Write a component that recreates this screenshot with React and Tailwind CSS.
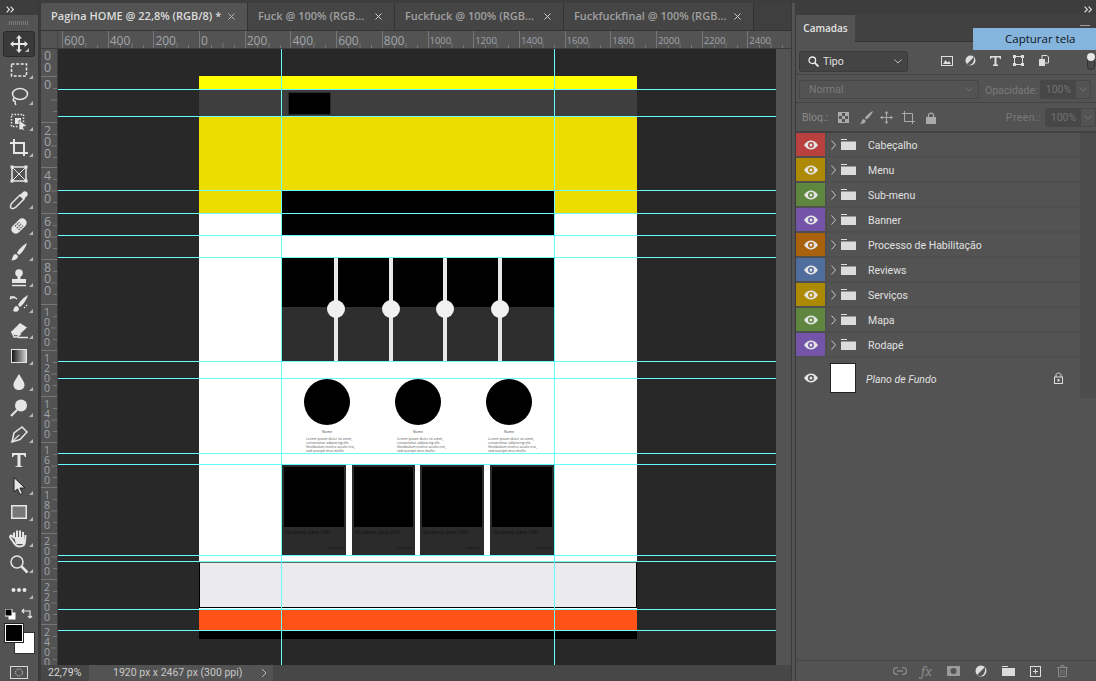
import React from "react";

const Tri = () => (
  <svg width="4" height="4" viewBox="0 0 4 4" className="absolute right-[5px] bottom-[4px]"><path d="M4 0V4H0Z" fill="#b8b8b8" /></svg>
);

const Chevrons = () => (
  <svg width="8" height="7" viewBox="0 0 8 7" fill="none" stroke="#e0e0e0" strokeWidth="1.200"><path d="M.6 .6L3.400 3.500L.6 6.400M4.600 .6L7.400 3.500L4.600 6.400" /></svg>
);

const S = ({ children, w = 20, h = 20, vb = "0 0 20 20" }) => (
  <svg width={w} height={h} viewBox={vb} fill="none" stroke="#e6e6e6" strokeWidth="1.5">{children}</svg>
);

const toolIcons = [
  <S key="move"><path d="M10 2V18M2 10H18" strokeWidth="2" /><path d="M10 1L7 4.500H13ZM10 19L7 15.500H13ZM1 10L4.500 7V13ZM19 10L15.500 7V13Z" fill="#e6e6e6" stroke="none" /></S>,
  <S key="marq"><rect x="2.500" y="4" width="15" height="12" strokeDasharray="3 1.600" /></S>,
  <S key="lasso"><ellipse cx="11" cy="8" rx="7.500" ry="5.500" /><path d="M5 12C3 14 5 16 6 14.500M6 14.500C6 16 6 18 7 19" /></S>,
  <S key="objsel"><rect x="2.500" y="2.500" width="12" height="12" strokeDasharray="1.600 1.400" /><rect x="6" y="6" width="6" height="6" fill="#e6e6e6" stroke="none" /><path d="M10 8L18 14L14 15L16 19L13 17.500L10 18Z" fill="#e6e6e6" stroke="#444" strokeWidth=".6" /></S>,
  <S key="crop"><path d="M1 5H15V18M5 1V15H19" strokeWidth="2" /></S>,
  <S key="frame"><rect x="3" y="3" width="14" height="14" /><path d="M3 3L17 17M17 3L3 17" strokeWidth="1" /><path d="M1.500 1.500h3v3h-3zM15.500 1.500h3v3h-3zM1.500 15.500h3v3h-3zM15.500 15.500h3v3h-3z" fill="#e6e6e6" stroke="none" /></S>,
  <S key="drop"><path d="M11 5L15 9L7 17C5.500 18.500 3 19 2 18C1 17 1.500 14.500 3 13Z" /><path d="M10.500 5.500L14 2C15 1 17 1 18 2.200C19 3.200 19 5 18 6L14.500 9.500Z" fill="#e6e6e6" stroke="none" /></S>,
  <S key="heal"><g transform="rotate(-45 10 10)"><rect x="1" y="5.500" width="18" height="9" rx="4.500" fill="#e6e6e6" stroke="none" /><path d="M7 7.500h6M7 10h6M7 12.500h6" stroke="#444" strokeWidth="1.200" strokeDasharray="1.500 1" /></g></S>,
  <S key="brush"><path d="M18 1C14 3 9 8 8 11L10 13C13 11 17 5 18 1Z" fill="#e6e6e6" stroke="none" /><path d="M7 12C4 12 4 15 3 17C2.500 18 2 18 2 18C5 19 9 17 9 14Z" fill="#e6e6e6" stroke="none" /></S>,
  <S key="stamp"><circle cx="10" cy="5" r="3.800" fill="#e6e6e6" stroke="none" /><path d="M8.500 8H11.500V11H17V15H3V11H8.500Z" fill="#e6e6e6" stroke="none" /><path d="M3 17.500H17" /></S>,
  <S key="hist"><path d="M19 1C15 3 10 8 9 11L11 13C14 11 18 5 19 1Z" fill="#e6e6e6" stroke="none" /><path d="M8 12C5 12 5 15 4 17C8 19 10 17 10 14Z" fill="#e6e6e6" stroke="none" /><path d="M1 5C3 3 6 3 8 5M6 3L1 3" strokeWidth="1.300" /><path d="M15 13l1 1M17 11l1 1" strokeWidth="1.200" /></S>,
  <S key="erase"><path d="M11 3L18 7.500L11 14H6L2.500 11.500Z" fill="#e6e6e6" stroke="none" /><path d="M2.500 11.500L6 14.500H11L8 17H5ZM9 17.500H19" strokeWidth="1.300" /></S>,
  <svg key="grad" width="16" height="14" viewBox="0 0 16 14"><defs><linearGradient id="tg" x1="0" x2="1"><stop offset="0" stopColor="#111" /><stop offset="1" stopColor="#d5d5d5" /></linearGradient></defs><rect x=".5" y=".5" width="15" height="13" fill="url(#tg)" stroke="#e6e6e6" /></svg>,
  <S key="blur"><path d="M10 2C13 7 15.500 10 15.500 13C15.500 16 13 18 10 18C7 18 4.500 16 4.500 13C4.500 10 7 7 10 2Z" fill="#e6e6e6" stroke="none" /></S>,
  <S key="dodge"><circle cx="12" cy="7.500" r="6" fill="#e6e6e6" stroke="none" /><path d="M8 12L2 18" strokeWidth="2.200" /></S>,
  <S key="pen"><path d="M3 18L5 9L13 3L18 8L11 15.500Z" /><path d="M3 18L9 12M9 12l1.500 -1" strokeWidth="1.100" /></S>,
  <svg key="type" width="16" height="16" viewBox="0 0 16 16" fill="#e6e6e6"><path d="M1 1H15V5H13.800C13.600 3.500 13 3 11 3H9.500V13C9.500 14 10 14.200 11.500 14.200V15H4.500V14.200C6 14.200 6.500 14 6.500 13V3H5C3 3 2.400 3.500 2.200 5H1Z" /></svg>,
  <S key="path"><path d="M5 1.500L5 16L8.500 13L11 18.500L13.500 17.500L11 12H16Z" fill="#e6e6e6" stroke="#222" strokeWidth="1" /></S>,
  <svg key="rect" width="16" height="14" viewBox="0 0 16 14"><rect x=".75" y=".75" width="14.500" height="12.500" fill="#777" stroke="#e6e6e6" strokeWidth="1.500" /></svg>,
  <S key="hand"><path d="M5 10V4.500M8 9V2.500M11 9V2.500M14 10V4M5.500 10L3 8C1.500 7 .5 8.500 1.500 10L5 15C6.500 17.500 8 18.500 10.500 18.500C14 18.500 16 16.500 16 13L16.500 7" strokeWidth="2" /><path d="M5 9H15V16H7Z" fill="#e6e6e6" stroke="none" /></S>,
  <S key="zoom"><circle cx="8" cy="8" r="6" /><path d="M12.500 12.500L18.500 18.500" strokeWidth="2.500" /></S>,
  <svg key="dots" width="16" height="6" viewBox="0 0 16 6" fill="#e6e6e6"><circle cx="2.500" cy="3" r="2" /><circle cx="8" cy="3" r="2" /><circle cx="13.500" cy="3" r="2" /></svg>,
];

const triless = new Set(["frame", "type"]);

function Toolbar() {
  return (
    <div className="w-[38px] shrink-0 h-full flex flex-col bg-[#535353]">
      <div className="h-[12px] bg-[#3d3d3d] flex items-center pl-[6px]"><Chevrons /></div>
      <div className="h-[16px] flex items-center justify-center">
        <div className="w-[20px] h-[4px] bg-[repeating-linear-gradient(90deg,#7a7a7a_0,#7a7a7a_1px,transparent_1px,transparent_2px)]" />
      </div>
      {toolIcons.map((ic, i) => (
        <div key={i} className={`relative h-[26px] flex items-center justify-center ${i === 0 ? "mx-[3px] rounded-[3px] bg-[#3a3a3a] border border-[#2b2b2b]" : ""}`}>
          {ic}
          {!triless.has(ic.key) && <Tri />}
        </div>
      ))}
      <div className="h-[12px] mt-[5px] mx-[5px] flex justify-between items-center">
        <svg width="11" height="11" viewBox="0 0 11 11"><rect x="3.500" y="3.500" width="7" height="7" fill="#fff" /><rect x="0" y="0" width="7" height="7" fill="#000" stroke="#fff" /></svg>
        <svg width="12" height="12" viewBox="0 0 12 12" fill="none" stroke="#e6e6e6" strokeWidth="1.200"><path d="M1 3H9V10M1 3L3 1M1 3L3 5M9 10L7 8M9 10L11 8" /></svg>
      </div>
      <div className="relative h-[32px] mt-[4px] mx-[5px]">
        <div className="w-[18px] h-[18px] bg-black border border-white absolute left-0 top-0 z-10 outline outline-[#222]" />
        <div className="w-[19px] h-[20px] bg-white absolute left-[10px] top-[9px] outline outline-[#333]" />
      </div>
      <div className="mt-[10px] flex justify-center">
        <svg width="18" height="13" viewBox="0 0 18 13" fill="none"><rect x=".5" y=".5" width="17" height="12" stroke="#d8d8d8" /><circle cx="9" cy="6.500" r="3.500" stroke="#d8d8d8" strokeDasharray="1.200 1" /></svg>
      </div>
    </div>
  );
}

function Tab({ w, title, active }) {
  return (
    <div className={`${w} h-full shrink-0 flex items-center pl-[10px] border-r border-[#333] ${active ? "bg-[#535353] text-[#dcdcdc]" : "bg-[#454545] text-[#a0a0a0]"}`}>
      <span className="text-[11px] font-semibold whitespace-nowrap">{title}</span>
      <svg width="7" height="7" viewBox="0 0 7 7" className="ml-auto mr-[12px]" stroke={active ? "#bbb" : "#cfcfcf"} strokeWidth="1"><path d="M.5 .5L6.500 6.500M6.500 .5L.5 6.500" /></svg>
    </div>
  );
}

const hLabels = ["600", "400", "200", "0", "200", "400", "600", "800", "1000", "1200", "1400", "1600", "1800", "2000", "2200", "2400"];
const vLabels = ["0", "200", "400", "600", "800", "1000", "1200", "1400", "1600", "1800", "2000", "2200", "2400"];

function HRuler() {
  return (
    <div className="h-[18px] bg-[#535353] flex items-stretch overflow-hidden border-b border-[#3c3c3c]">
      <div className="w-[17px] shrink-0 border-r border-[#444]" />
      <div className="w-[4px] shrink-0" />
      {hLabels.map((l, i) => (
        <div key={i} className={`relative w-[45.7px] shrink-0 border-l border-[#777] pl-[1px] text-[#a0a4aa] ${l.length > 3 ? "text-[9.5px] leading-[20px]" : "text-[12px] leading-[20px]"}`} >
          {l}
          <svg width="46" height="18" className="absolute left-0 top-0" stroke="#777"><path d="M11.500 14V18M23 12V18M34.500 14V18" /></svg>
        </div>
      ))}
    </div>
  );
}

function VCell({ l }) {
  const small = l.length > 3;
  return (
    <div className="relative h-[45.7px] shrink-0 border-t border-[#777] pt-[2px] pl-[3px] text-[#a0a4aa] overflow-hidden">
      {l.split("").map((d, i) => (
        <div key={i} className={small ? "text-[10.5px] leading-[10px]" : "text-[12.5px] leading-[11.5px]"}>{d}</div>
      ))}
      <svg width="17" height="46" className="absolute left-0 top-0" stroke="#777"><path d="M12 11.500H17M10 23H17M12 34.500H17" /></svg>
    </div>
  );
}

function VRuler() {
  return (
    <div className="w-[17px] h-full shrink-0 bg-[#535353] overflow-hidden border-r border-[#3c3c3c] flex flex-col">
      <div className="h-[27px] shrink-0 overflow-hidden flex flex-col justify-end text-[#a0a4aa] text-[12.5px] leading-[11.5px] pl-[3px] pb-[3px]">
        <div>0</div><div>0</div>
      </div>
      {vLabels.map((l, i) => <VCell key={i} l={l} />)}
    </div>
  );
}

const guidesH = [40, 67, 141, 164, 186, 208, 312, 329, 404, 415, 506, 512, 560, 581];
const guidesV = [223, 496];

function Slide({ w }) {
  return (
    <div className={`${w} h-full flex flex-col`}>
      <div className="h-[49px] bg-black" />
      <div className="flex-1 bg-[#2e2e2e]" />
    </div>
  );
}

function Sep() {
  return (
    <div className="relative w-[4px] h-full bg-[#e8e8e8]">
      <div className="absolute left-[-7px] top-[42px] w-[18px] h-[18px] rounded-full bg-[#f0f0f0]" />
    </div>
  );
}

function Review({ ml }) {
  return (
    <div className={`${ml} w-[46px] flex flex-col items-center`}>
      <div className="w-[46px] h-[46px] rounded-full bg-black" />
      <div className="mt-[5px] text-[3.5px] leading-[4px] text-[#444]">Nome</div>
      <div className="mt-[3px] w-[46px] pl-[2px] text-[3.5px] leading-[4.100px] text-[#555] whitespace-nowrap">
        <div>Lorem ipsum dolor sit amet,</div>
        <div>consectetur adipiscing elit.</div>
        <div>Vestibulum viverra iaculis nisi,</div>
        <div>sed suscipit eros mollis</div>
      </div>
    </div>
  );
}

function Card({ w, ml }) {
  return (
    <div className={`${w} ${ml} h-[90px] bg-[#2b2b2b] p-[2px] flex flex-col`}>
      <div className="h-[60px] bg-black" />
      <div className="mt-[2px] pl-[1px] text-[5px] leading-[6px] text-[#111] whitespace-nowrap">Mudança para CNH</div>
      <div className="mt-auto pb-[3px] pr-[1px] text-right text-[3.500px] leading-[5px] text-[#111]">Leia mais</div>
    </div>
  );
}

function Page() {
  return (
    <div className="ml-[141px] mt-[27px] w-[438px] h-[563px] flex flex-col">
      <div className="h-[14px] bg-[#ffff00]" />
      <div className="h-[27px] bg-[#3e3e3e] pl-[90px] pt-[3px]">
        <div className="w-[41px] h-[21px] bg-black outline outline-[#2b2b2b]" />
      </div>
      <div className="h-[97px] bg-[#ecdc00] pl-[83px] pt-[74px]">
        <div className="w-[272px] h-[23px] bg-black" />
      </div>
      <div className="h-[348px] bg-white pl-[83px]">
        <div className="w-[272px] flex flex-col">
          <div className="h-[21px] bg-black" />
          <div className="h-[103px] mt-[23px] flex">
            <Slide w="w-[52px]" /><Sep /><Slide w="w-[51px]" /><Sep /><Slide w="w-[50px]" /><Sep /><Slide w="w-[51px]" /><Sep /><Slide w="w-[52px]" />
          </div>
          <div className="mt-[18px] h-[86px] flex">
            <Review ml="ml-[22px]" /><Review ml="ml-[45px]" /><Review ml="ml-[45px]" />
          </div>
          <div className="flex">
            <Card w="w-[64px]" ml="" /><Card w="w-[63px]" ml="ml-[6px]" /><Card w="w-[64px]" ml="ml-[5px]" /><Card w="w-[64px]" ml="ml-[6px]" />
          </div>
        </div>
      </div>
      <div className="h-[46px] bg-[#ebebed] border-l border-r border-b border-black border-t border-t-[#666]" />
      <div className="h-[2px] bg-white" />
      <div className="h-[20px] bg-[#ff5216]" />
      <div className="h-[9px] bg-black" />
    </div>
  );
}

function Canvas() {
  return (
    <div className="relative flex-1 h-full bg-[#282828] overflow-hidden">
      <Page />
      {guidesH.map((y) => (
        <div key={y} className="absolute left-0 right-0 h-[1px] bg-[#66ffff]" style={{ top: y }} />
      ))}
      {guidesV.map((x) => (
        <div key={x} className="absolute top-0 bottom-0 w-[1px] bg-[#66ffff]" style={{ left: x }} />
      ))}
    </div>
  );
}

function DocArea() {
  return (
    <div className="w-[751px] shrink-0 h-full flex flex-col bg-[#535353] border-r border-[#3a3a3a]">
      <div className="h-[28px] flex bg-[#3f3f3f] border-b border-[#333]">
        <Tab w="w-[207px]" title="Pagina HOME @ 22,8% (RGB/8) *" active />
        <Tab w="w-[147px]" title="Fuck @ 100% (RGB..." />
        <Tab w="w-[169px]" title="Fuckfuck @ 100% (RGB..." />
        <Tab w="w-[190px]" title="Fuckfuckfinal @ 100% (RGB..." />
      </div>
      <HRuler />
      <div className="flex-1 flex min-h-0">
        <VRuler />
        <Canvas />
        <div className="w-[15px] shrink-0 h-full bg-[#535353]" />
      </div>
      <div className="h-[16px] flex items-stretch font-['Roboto',sans-serif] text-[10.500px] leading-[16px] text-[#d8d8d8]">
        <div className="w-[48px] bg-[#474747] pl-[7px]">22,79%</div>
        <div className="w-[184px] bg-[#535353] flex items-center pl-[24px] text-[#c8c8c8]">
          <span className="whitespace-nowrap">1920 px x 2467 px (300 ppi)</span>
          <svg width="6" height="10" viewBox="0 0 6 10" fill="none" stroke="#bbb" className="ml-auto mr-[6px]"><path d="M1 1L5 5L1 9" /></svg>
        </div>
        <div className="flex-1 bg-[#474747]" />
      </div>
    </div>
  );
}

function Eye({ tint }) {
  return (
    <svg width="14" height="10" viewBox="0 0 14 10">
      <path d="M0 5C2.500 1.500 4.500 .5 7 .5C9.500 .5 11.500 1.500 14 5C11.500 8.500 9.500 9.500 7 9.500C4.500 9.500 2.500 8.500 0 5Z" fill="#e4e4e4" />
      <circle cx="7" cy="5" r="3" fill={tint} />
      <circle cx="7" cy="5" r="1.500" fill="#e4e4e4" />
    </svg>
  );
}

const layers = [
  ["Cabeçalho", "bg-[#b84140]", "#b84140"],
  ["Menu", "bg-[#ad8a06]", "#ad8a06"],
  ["Sub-menu", "bg-[#5f863f]", "#5f863f"],
  ["Banner", "bg-[#7354a8]", "#7354a8"],
  ["Processo de Habilitação", "bg-[#a9610d]", "#a9610d"],
  ["Reviews", "bg-[#4f6d9d]", "#4f6d9d"],
  ["Serviços", "bg-[#ad8a06]", "#ad8a06"],
  ["Mapa", "bg-[#5f863f]", "#5f863f"],
  ["Rodapé", "bg-[#7354a8]", "#7354a8"],
];

function LayerRow({ name, cls, color }) {
  return (
    <div className="h-[23px] mb-[2px] flex">
      <div className={`${cls} w-[29px] flex items-center justify-center`}>
        <Eye tint={color} />
      </div>
      <div className="ml-[2px] w-[253px] bg-[#535353] flex items-center">
        <svg width="5" height="10" viewBox="0 0 5 10" fill="none" stroke="#c4c4c4" className="ml-[4px]"><path d="M.5 .5L4.500 5L.5 9.500" /></svg>
        <svg width="15" height="11" viewBox="0 0 15 11" fill="#dcdcdc" className="ml-[5px]"><path d="M0 0H6V1H0ZM0 2.500H15V11H0Z" /></svg>
        <span className="ml-[12px] mt-[2px] text-[10.500px] text-[#e0e0e0] whitespace-nowrap">{name}</span>
      </div>
    </div>
  );
}

function PctBox() {
  return (
    <div className="w-[51px] h-[19px] shrink-0 flex border border-[#474747] rounded-[2px] text-[10.500px] text-[#727272]">
      <div className="w-[35px] bg-[#474747] text-center leading-[17px]">100%</div>
      <div className="flex-1 flex items-center justify-center">
        <svg width="8" height="5" viewBox="0 0 8 5" fill="none" stroke="#727272"><path d="M.5 .5L4 4L7.500 .5" /></svg>
      </div>
    </div>
  );
}

function Panel() {
  return (
    <div className="relative flex-1 min-w-0 h-full flex flex-col bg-[#535353] border-l border-[#3a3a3a] font-['Roboto',sans-serif]">
      <div className="h-[12px] bg-[#3d3d3d] flex items-center justify-end pr-[4px]"><Chevrons /></div>
      <div className="h-[27px] flex bg-[#414141] border-b border-[#333]">
        <div className="w-[59px] h-[27px] bg-[#535353] flex items-center justify-center text-[10px] font-semibold font-['Open_Sans',sans-serif] text-[#e4e4e4]">Camadas</div>
        <div className="ml-auto mr-[6px] mt-[10px] w-[10px] h-[7px] border-t border-b border-[#999] flex items-center"><div className="w-full h-[1px] bg-[#999]" /></div>
      </div>
      <div className="absolute right-0 top-[25px] w-[123px] h-[22px] bg-[#85b4dc] pl-[32px] font-['Open_Sans',sans-serif] text-[11.500px] leading-[22px] text-[#101522]">Capturar tela</div>

      <div className="h-[33px] pt-[9px] flex items-start border-b border-[#424242]">
        <div className="ml-[3px] w-[109px] h-[21px] shrink-0 rounded-[3px] bg-[#444] border border-[#3a3a3a] flex items-center pl-[8px] text-[10.500px] text-[#e0e0e0]">
          <svg width="11" height="11" viewBox="0 0 11 11" fill="none" stroke="#eee" strokeWidth="1.300"><circle cx="4.300" cy="4.300" r="3.300" /><path d="M6.800 6.800L10.500 10.500" strokeWidth="1.800" /></svg>
          <span className="ml-[4px]">Tipo</span>
          <svg width="8" height="5" viewBox="0 0 8 5" fill="none" stroke="#bbb" className="ml-auto mr-[5px]"><path d="M.5 .5L4 4L7.500 .5" /></svg>
        </div>
        <div className="ml-[33px] mt-[4px] flex items-center gap-[12px]">
          <svg width="12" height="10" viewBox="0 0 12 10"><rect x=".5" y=".5" width="11" height="9" fill="none" stroke="#ddd" /><path d="M2 8L4.500 4L6.500 6.500L8 5L10 8Z" fill="#ddd" /></svg>
          <svg width="11" height="11" viewBox="0 0 11 11"><circle cx="5.500" cy="5.500" r="5" fill="#ddd" /><path d="M9 2L2 9C4 11 9.500 10 9 2Z" fill="#555" /></svg>
          <svg width="11" height="10" viewBox="0 0 11 10" fill="#ddd" className="ml-[2px]"><path d="M0 0H11V3H10C10 2 9.500 1.500 8 1.500H6.500V8.500H8V10H3V8.500H4.500V1.500H3C1.500 1.500 1 2 1 3H0Z" /></svg>
          <svg width="11" height="11" viewBox="0 0 11 11" fill="none" stroke="#ddd"><rect x="1.500" y="1.500" width="8" height="8" /><path d="M0 0h3v3h-3zM8 0h3v3h-3zM0 8h3v3h-3zM8 8h3v3h-3z" fill="#ddd" stroke="none" /></svg>
          <svg width="10" height="11" viewBox="0 0 10 11" className="ml-[3px]"><path d="M3 .5H8L9.500 2V8H3Z" fill="none" stroke="#ddd" /><rect x="0" y="4" width="6" height="7" fill="#ddd" /></svg>
        </div>
        <div className="relative ml-[38px] mt-[2px] w-[8px] h-[17px] rounded-full border border-[#2f2f2f] bg-[#4a4a4a]">
          <div className="absolute -left-[1px] -top-[1px] w-[8px] h-[8px] rounded-full bg-[#e8e8e8]" />
        </div>
      </div>

      <div className="h-[28px] pt-[5px] flex items-start border-b border-[#424242]">
        <div className="ml-[3px] w-[180px] h-[19px] shrink-0 rounded-[2px] flex items-center border border-[#474747] text-[#7a7a7a]">
          <span className="ml-[9px] mt-[1px] text-[10.500px]">Normal</span>
          <svg width="8" height="5" viewBox="0 0 8 5" fill="none" stroke="#6f6f6f" className="ml-auto mr-[5px]"><path d="M.5 .5L4 4L7.500 .5" /></svg>
        </div>
        <span className="ml-[6px] text-[10.500px] leading-[21px] text-[#7a7a7a] w-[55px] shrink-0">Opacidade:</span>
        <PctBox />
      </div>

      <div className="h-[28px] pt-[5px] flex items-start">
        <span className="ml-[6px] w-[34px] shrink-0 text-[10.500px] leading-[19px] text-[#8a8a8a]">Bloq.:</span>
        <div className="ml-[2px] mt-[3px] flex items-center gap-[11px]">
          <svg width="11" height="11" viewBox="0 0 11 11"><rect x=".5" y=".5" width="10" height="10" fill="none" stroke="#aaa" /><path d="M1 1h3v3h-3zM7 1h3v3h-3zM4 4h3v3h-3zM1 7h3v3h-3zM7 7h3v3h-3z" fill="#aaa" /></svg>
          <svg width="13" height="13" viewBox="0 0 13 13" fill="#aaa"><path d="M13 0C10 1 6 5 5 7L6.500 8.500C9 7 12 3 13 0Z" /><path d="M4 8C1.500 8 2.500 11 0 13C3 13 6 12 5.500 9.500Z" /></svg>
          <svg width="13" height="13" viewBox="0 0 13 13" fill="none" stroke="#aaa" className="-ml-[4px]"><path d="M6.500 1V12M1 6.500H12" /><path d="M6.500 0L4.500 2.500H8.500ZM6.500 13L4.500 10.500H8.500ZM0 6.500L2.500 4.500V8.500ZM13 6.500L10.500 4.500V8.500Z" fill="#aaa" stroke="none" /></svg>
          <svg width="13" height="13" viewBox="0 0 13 13" fill="none" stroke="#aaa" className="-ml-[2px]"><path d="M2.500 0V10.500H13M0 2.500H10.500V13" /></svg>
          <svg width="10" height="12" viewBox="0 0 10 12"><path d="M2.500 5V3.200C2.500 .5 7.500 .5 7.500 3.200V5" fill="none" stroke="#aaa" strokeWidth="1.300" /><rect x="0" y="5" width="10" height="7" fill="#aaa" /></svg>
        </div>
        <span className="ml-auto text-[10.500px] tracking-[0.4px] leading-[19px] text-[#7a7a7a] mr-[4px]">Preen.:</span>
        <PctBox />
      </div>

      <div className="h-[2px] bg-[#424242]" />
      <div className="flex-1 bg-[#4c4c4c] relative min-h-0">
        <div className="w-[284px] bg-[#4f4f4f]">
          {layers.map(([n, c, hex]) => <LayerRow key={n} name={n} cls={c} color={hex} />)}
          <div className="h-[40px] flex bg-[#535353]">
            <div className="w-[29px] flex items-center justify-center"><Eye tint="#535353" /></div>
            <div className="ml-[5px] w-[26px] h-[30px] mt-[5px] bg-white border border-[#222]" />
            <span className="ml-[10px] text-[10.500px] italic leading-[43px] text-[#e0e0e0] whitespace-nowrap">Plano de Fundo</span>
            <svg width="9" height="12" viewBox="0 0 9 12" fill="none" stroke="#ddd" className="ml-auto mr-[17px] mt-[14px]"><path d="M2 5V3C2 .5 7 .5 7 3V5" /><rect x=".5" y="5" width="8" height="6.500" /><rect x="3.500" y="7" width="2" height="2.500" fill="#ddd" stroke="none" /></svg>
          </div>
        </div>
        <div className="absolute left-0 right-0 top-[265px] bottom-0 bg-[#535353]" />
      </div>

      <div className="h-[21px] bg-[#535353] border-t border-[#474747] flex items-center pl-[97px] gap-[13px]">
        <svg width="14" height="8" viewBox="0 0 14 8" fill="none" stroke="#8a8a8a" strokeWidth="1.300"><path d="M5 .7H3.500C-.5 .7 -.5 7.300 3.500 7.300H5M9 .7H10.500C14.500 .7 14.500 7.300 10.500 7.300H9M4 4H10" /></svg>
        <span className="ml-[1px] text-[15px] italic leading-[20px] text-[#8a8a8a] w-[13px] font-serif">fx</span>
        <svg width="13" height="10" viewBox="0 0 13 10"><rect width="13" height="10" fill="#9a9a9a" /><circle cx="6.500" cy="5" r="3" fill="#535353" /></svg>
        <svg width="12" height="12" viewBox="0 0 12 12" className="ml-[2px]"><circle cx="6" cy="6" r="5.500" fill="#ddd" /><path d="M10 2L2 10C4.500 12.500 11 11 10 2Z" fill="#555" /></svg>
        <svg width="13" height="10" viewBox="0 0 13 10" fill="#dcdcdc" className="ml-[2px]"><path d="M0 0H6V1H0ZM0 2H13V10H0Z" /></svg>
        <svg width="11" height="11" viewBox="0 0 11 11" fill="none" stroke="#ddd" className="ml-[2px]"><rect x=".5" y=".5" width="10" height="10" /><path d="M5.500 3V8M3 5.500H8" /></svg>
        <svg width="11" height="12" viewBox="0 0 11 12" fill="none" stroke="#8a8a8a" className="ml-[3px]"><path d="M0 2.500H11M4 2.500V.5H7V2.500M1.500 2.500V11.500H9.500V2.500M4 4.500V10M7 4.500V10" /></svg>
      </div>
    </div>
  );
}

export default function App() {
  return (
    <div className="w-[1096px] h-[681px] flex flex-col bg-[#535353] overflow-hidden text-[#ddd] font-['Open_Sans','Noto_Sans',sans-serif]">
      <div className="h-[3px] bg-[#3d3d3d] shrink-0" />
      <div className="flex-1 flex min-h-0">
        <Toolbar />
        <div className="w-[3px] shrink-0 h-full bg-[#3a3a3a]" />
        <DocArea />
        <div className="w-[3px] shrink-0 h-full bg-[#535353]" />
        <Panel />
      </div>
    </div>
  );
}
